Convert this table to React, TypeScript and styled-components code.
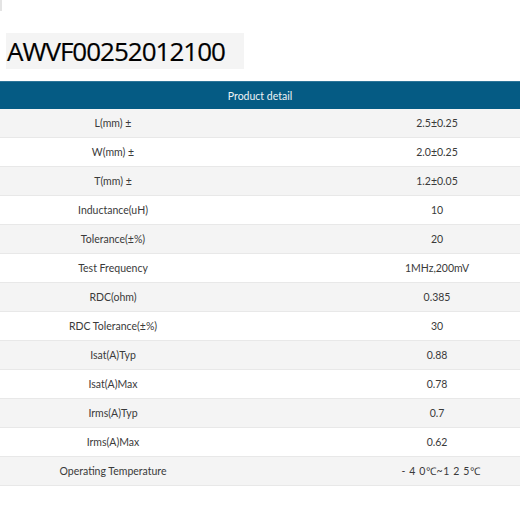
import React from "react";
import styled, { createGlobalStyle } from "styled-components";

const Global = createGlobalStyle`
  html, body { margin: 0; padding: 0; background: #fff; }
  body { font-family: "Lato", "Open Sans", sans-serif; overflow: hidden; }
`;

const Page = styled.div`
  width: 520px;
  display: flex;
  flex-direction: column;
  overflow: hidden;
`;

const Mark = styled.div`
  width: 2px;
  height: 11px;
  background: #e4e4e4;
`;

const Title = styled.h1`
  margin: 22px 0 0 6px;
  width: 238px;
  height: 36px;
  background: #f4f4f4;
  font-family: "Open Sans", sans-serif;
  font-weight: 400;
  font-size: 26px;
  line-height: 36px;
  color: #000;
  padding-left: 1px;
  box-sizing: border-box;
  letter-spacing: -1px;
  -webkit-text-stroke: 0.2px #000;
`;

const Header = styled.div`
  margin-top: 12px;
  height: 28px;
  background: #055b84;
  border-top: 1px solid #2d7599;
  box-sizing: border-box;
  display: flex;
  align-items: center;
  justify-content: center;
  color: #eef3f6;
  font-size: 10.5px;
`;

const Table = styled.div`
  width: 648px;
  display: grid;
  grid-template-columns: 226px 422px;
`;

const Row = styled.div<{ $alt: boolean }>`
  display: contents;
  & > div {
    background: ${(p) => (p.$alt ? "#f4f4f4" : "#ffffff")};
  }
`;

const Cell = styled.div<{ $shift?: number }>`
  height: 29px;
  box-sizing: border-box;
  border-bottom: 1px solid #e8e8e8;
  display: flex;
  align-items: center;
  justify-content: center;
  font-size: 10.5px;
  color: #3a3a3a;
  white-space: pre;
`;

const Temp = styled.span`
  letter-spacing: 0.6px;
  padding-left: 8px;
`;

const rows: [string, React.ReactNode][] = [
  ["L(mm) ±", "2.5±0.25"],
  ["W(mm) ±", "2.0±0.25"],
  ["T(mm) ±", "1.2±0.05"],
  ["Inductance(uH)", "10"],
  ["Tolerance(±%)", "20"],
  ["Test Frequency", "1MHz,200mV"],
  ["RDC(ohm)", "0.385"],
  ["RDC Tolerance(±%)", "30"],
  ["Isat(A)Typ", "0.88"],
  ["Isat(A)Max", "0.78"],
  ["Irms(A)Typ", "0.7"],
  ["Irms(A)Max", "0.62"],
  ["Operating Temperature", <Temp>- 4 0℃~1 2 5℃</Temp>],
];

export default function App() {
  return (
    <Page>
      <Global />
      <Mark />
      <Title>AWVF00252012100</Title>
      <Header>Product detail</Header>
      <Table>
        {rows.map(([k, v], i) => (
          <Row key={k} $alt={i % 2 === 0}>
            <Cell>{k}</Cell>
            <Cell>{v}</Cell>
          </Row>
        ))}
      </Table>
    </Page>
  );
}
